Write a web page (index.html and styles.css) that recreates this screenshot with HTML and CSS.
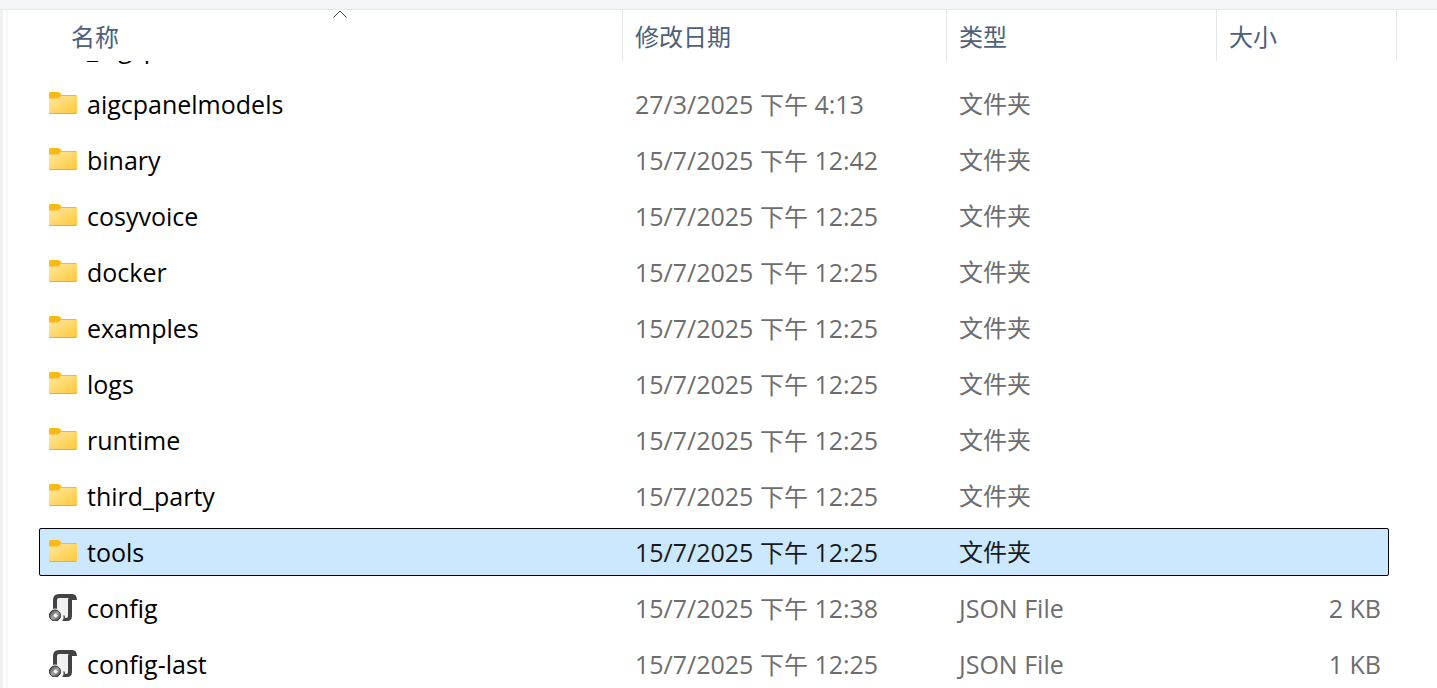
FILE: index.html
```
<!DOCTYPE html>
<html lang="zh-CN">
<head>
  <meta charset="UTF-8" />
  <meta name="viewport" content="width=device-width, initial-scale=1" />
  <title>文件列表</title>
  <link rel="stylesheet" href="styles.css">
</head>
<body>
  <!-- Shared icons -->
  <svg class="sprite" aria-hidden="true">
    <defs>
      <linearGradient id="folder-fill" x1="0" y1="0" x2="1" y2="1">
        <stop offset="0" stop-color="#ffe8a3" />
        <stop offset="1" stop-color="#ffc937" />
      </linearGradient>
      <linearGradient id="gear-fill" x1="0" y1="0" x2="1" y2="1">
        <stop offset="0" stop-color="#333333" />
        <stop offset="0.5" stop-color="#a8a8a8" />
        <stop offset="1" stop-color="#333333" />
      </linearGradient>
      <symbol id="folder" viewBox="0 0 28 28">
        <path d="M0 4.5Q0 3 1.5 3H8.5Q10 3 11 4L13 6V12H0Z" fill="#fbb917" />
        <path d="M0 9.5H9L13 6H27Q28 6 28 7V24Q28 25 27 25H1Q0 25 0 24Z" fill="url(#folder-fill)" />
        <path d="M12.5 6.5H27.5" stroke="#f3bb35" />
        <path d="M0.5 24.5H27.5" stroke="#f0ae2c" />
      </symbol>
      <symbol id="script" viewBox="0 -1 28 28" overflow="visible">
        <path d="M6 17V6Q6 2 10 2H21V23Q20 26 16 26H10Z" fill="#f0f0f2" />
        <path d="M4 15V6Q4 0 10 0H23Q28 0 28 6H23V22Q23 27 18 27H13Q14.500 26 14.500 24V21Q16 21 16 24H17Q19 24 19 22V6Q19 4 20 4H10Q8 4 8 6V15Z" fill="#434345" />
        <circle cx="6" cy="21.500" r="7" fill="#f4f4f4" />
        <circle cx="6" cy="21.500" r="5.500" fill="url(#gear-fill)" stroke="#2c2c2c" />
        <circle cx="6.500" cy="21.500" r="2.500" fill="#f4f4f4" stroke="#8a8a8a" />
      </symbol>
    </defs>
  </svg>

  <div class="toolbar-edge"></div>

  <main class="explorer">
    <table class="file-list">
      <thead>
        <tr>
          <th scope="col" aria-sort="ascending">
            <button type="button">名称</button>
            <svg class="sort-arrow" viewBox="0 0 14 8" aria-hidden="true"><path d="M0.500 7.500L7 1L13.500 7.500" /></svg>
          </th>
          <th scope="col"><button type="button">修改日期</button></th>
          <th scope="col"><button type="button">类型</button></th>
          <th scope="col"><button type="button">大小</button></th>
        </tr>
      </thead>
      <tbody>
        <!-- Row scrolled under the header -->
        <tr class="scrolled">
          <td class="name"><span class="icon"></span>_aigcp</td>
          <td></td>
          <td></td>
          <td class="size"></td>
        </tr>
        <tr>
          <td class="name"><svg class="icon"><use href="#folder" /></svg>aigcpanelmodels</td>
          <td>27/3/2025 <span class="cjk">下午</span> 4:13</td>
          <td class="cjk">文件夹</td>
          <td class="size"></td>
        </tr>
        <tr>
          <td class="name"><svg class="icon"><use href="#folder" /></svg>binary</td>
          <td>15/7/2025 <span class="cjk">下午</span> 12:42</td>
          <td class="cjk">文件夹</td>
          <td class="size"></td>
        </tr>
        <tr>
          <td class="name"><svg class="icon"><use href="#folder" /></svg>cosyvoice</td>
          <td>15/7/2025 <span class="cjk">下午</span> 12:25</td>
          <td class="cjk">文件夹</td>
          <td class="size"></td>
        </tr>
        <tr>
          <td class="name"><svg class="icon"><use href="#folder" /></svg>docker</td>
          <td>15/7/2025 <span class="cjk">下午</span> 12:25</td>
          <td class="cjk">文件夹</td>
          <td class="size"></td>
        </tr>
        <tr>
          <td class="name"><svg class="icon"><use href="#folder" /></svg>examples</td>
          <td>15/7/2025 <span class="cjk">下午</span> 12:25</td>
          <td class="cjk">文件夹</td>
          <td class="size"></td>
        </tr>
        <tr>
          <td class="name"><svg class="icon"><use href="#folder" /></svg>logs</td>
          <td>15/7/2025 <span class="cjk">下午</span> 12:25</td>
          <td class="cjk">文件夹</td>
          <td class="size"></td>
        </tr>
        <tr>
          <td class="name"><svg class="icon"><use href="#folder" /></svg>runtime</td>
          <td>15/7/2025 <span class="cjk">下午</span> 12:25</td>
          <td class="cjk">文件夹</td>
          <td class="size"></td>
        </tr>
        <tr>
          <td class="name"><svg class="icon"><use href="#folder" /></svg>third_party</td>
          <td>15/7/2025 <span class="cjk">下午</span> 12:25</td>
          <td class="cjk">文件夹</td>
          <td class="size"></td>
        </tr>
        <tr class="selected">
          <td class="name"><svg class="icon"><use href="#folder" /></svg>tools</td>
          <td>15/7/2025 <span class="cjk">下午</span> 12:25</td>
          <td class="cjk">文件夹</td>
          <td class="size"></td>
        </tr>
        <tr>
          <td class="name"><svg class="icon"><use href="#script" /></svg>config</td>
          <td>15/7/2025 <span class="cjk">下午</span> 12:38</td>
          <td>JSON File</td>
          <td class="size">2 KB</td>
        </tr>
        <tr>
          <td class="name"><svg class="icon"><use href="#script" /></svg>config-last</td>
          <td>15/7/2025 <span class="cjk">下午</span> 12:25</td>
          <td>JSON File</td>
          <td class="size">1 KB</td>
        </tr>
      </tbody>
    </table>
  </main>
</body>
</html>
```

FILE: styles.css
```
* {
  box-sizing: border-box;
}

body {
  margin: 0;
  height: 100vh;
  display: flex;
  flex-direction: column;
  overflow: hidden;
  background: #ffffff;
  font-family: "Open Sans", "Noto Sans CJK SC", sans-serif;
  font-size: 25px;
  line-height: 32px;
  color: #6d6d6d;
}

.sprite {
  position: absolute;
  width: 0;
  height: 0;
}

/* Bottom edge of the toolbar above the list */
.toolbar-edge {
  flex: none;
  height: 10px;
  background: #f4f5f7;
  border-bottom: 1px solid #e5e7ea;
}

/* Left border is the splitter, the gradient is the thin line next to it */
.explorer {
  flex: 1;
  min-height: 0;
  padding: 0 40px 0 36px;
  border-left: 3px solid #f0f0f0;
  background: linear-gradient(#f7f7f7, #f7f7f7) 3px 0 / 2px 100% no-repeat;
}

.file-list,
.file-list thead,
.file-list tbody {
  display: block;
}

.file-list tr {
  display: grid;
  grid-template-columns: minmax(200px, 1fr) 324px 270px 180px;
}

/* Column headers */
.file-list th {
  position: relative;
  height: 51px;
  padding: 0;
  border-right: 1px solid #e5e5e5;
}

.file-list th button {
  width: 100%;
  height: 100%;
  padding: 2px 12px 0;
  border: none;
  background: none;
  font: inherit;
  font-size: 24px;
  font-weight: normal;
  color: #4c607a;
  text-align: left;
}

.file-list th:first-child button {
  padding-left: 32px;
}

.sort-arrow {
  position: absolute;
  top: 0;
  left: 18px;
  right: 0;
  width: 14px;
  height: 8px;
  margin: 0 auto;
  fill: none;
  stroke: #444444;
}

/* Rows */
.file-list tbody tr {
  grid-template-columns: minmax(200px, 1fr) 324px 270px 172px;
  height: 48px;
  margin: 0 8px 8px 0;
  align-items: center;
}

.file-list td {
  padding: 0 12px;
  white-space: nowrap;
}

.file-list .name {
  display: flex;
  align-items: center;
  gap: 10px;
  padding-left: 10px;
  color: #000000;
}

.file-list .size {
  padding-right: 8px;
  text-align: right;
}

.icon {
  flex: none;
  width: 28px;
  height: 28px;
  margin-bottom: 2px;
}

.cjk {
  font-size: 24px;
}

.file-list tbody .scrolled {
  height: 11px;
  align-content: end;
  overflow: hidden;
}

.scrolled .name {
  padding-bottom: 8px;
}

.file-list .selected {
  background: #cce8ff;
  outline: 1px solid #000000;
  outline-offset: -1px;
  border-radius: 2px;
  color: #1a1a1a;
}
```
